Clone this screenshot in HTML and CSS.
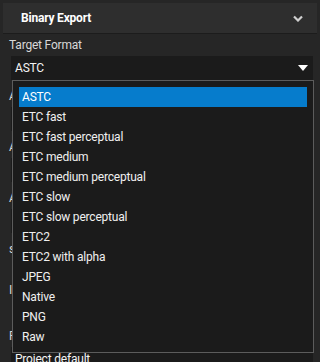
FILE: index.html
```html
<!DOCTYPE html>
<html lang="en">
<head>
<meta charset="UTF-8">
<title>Binary Export</title>
<link rel="stylesheet" href="styles.css">
</head>
<body>
<div class="panel">
  <div class="panel-header">
    <span class="panel-title">Binary Export</span>
    <svg class="chevron" width="10" height="7" viewBox="0 0 10 7">
      <path d="M1 1.5 L5 5.5 L9 1.5" fill="none" stroke="#d0d0d0" stroke-width="2.2"/>
    </svg>
  </div>

  <div class="fields">
    <div class="field">
      <div class="label">Target Format</div>
      <div class="select">
        <span>ASTC</span>
        <svg class="arrow" width="10" height="6" viewBox="0 0 10 6"><path d="M0 0 H10 L5 6 Z" fill="#ffffff"/></svg>
      </div>
    </div>
    <div class="field">
      <div class="label">ASTC Block Size</div>
      <div class="select"><span>4x4</span></div>
    </div>
    <div class="field">
      <div class="label">ASTC Quality</div>
      <div class="select"><span>Medium</span></div>
    </div>
    <div class="field">
      <div class="label">Alpha Mode</div>
      <div class="select"><span>Auto</span></div>
    </div>
    <div class="field short">
      <div class="label">sRGB</div>
      <div class="check"></div>
    </div>
    <div class="field mid">
      <div class="label">Include Mipmaps</div>
      <div class="check"></div>
    </div>
    <div class="field">
      <div class="label">Premultiply Alpha</div>
      <div class="select"><span>Project default</span></div>
    </div>
  </div>

  <div class="popup">
    <div class="option selected">ASTC</div>
    <div class="option">ETC fast</div>
    <div class="option">ETC fast perceptual</div>
    <div class="option">ETC medium</div>
    <div class="option">ETC medium perceptual</div>
    <div class="option">ETC slow</div>
    <div class="option">ETC slow perceptual</div>
    <div class="option">ETC2</div>
    <div class="option">ETC2 with alpha</div>
    <div class="option">JPEG</div>
    <div class="option">Native</div>
    <div class="option">PNG</div>
    <div class="option">Raw</div>
  </div>
</div>
</body>
</html>
```

FILE: styles.css
```css
body {
  margin: 0;
  background-color: #262626;
  font-family: Roboto, "Open Sans", sans-serif;
  font-size: 12px;
  letter-spacing: -0.2px;
  color: #f0f0f0;
  overflow: hidden;
  height: 362px;
}

.panel {
  position: relative;
  padding: 3px 3px 0 3px;
}

.panel-header {
  height: 30px;
  background-color: #2e2e2e;
  border-bottom: 1px solid #1c1c1c;
  display: flex;
  align-items: center;
  justify-content: space-between;
  padding: 0 14px 0 18px;
}

.panel-title {
  font-weight: bold;
  font-size: 12px;
  color: #ffffff;
}

.chevron {
  display: block;
}

.fields {
  padding: 2px 4px 0 6px;
}

.field {
  margin-bottom: 7px;
}

.label {
  height: 18px;
  line-height: 18px;
  color: #d8d8d8;
  margin-bottom: 2px;
}

.select {
  height: 24px;
  margin-left: 2px;
  background-color: #1b1b1b;
  display: flex;
  align-items: center;
  justify-content: space-between;
  padding: 0 5px 0 4px;
  color: #f4f4f4;
}

.arrow {
  display: block;
}

.check {
  height: 14px;
}

.field.mid .check {
  height: 19px;
}

.popup {
  position: absolute;
  left: 12px;
  top: 80px;
  width: 288px;
  padding: 6px 6px 5px 6px;
  background-color: #1b1b1b;
  border: 1px solid #5c5c5c;
}

.option {
  height: 20px;
  line-height: 20px;
  padding-left: 3px;
  color: #f0f0f0;
}

.option.selected {
  background-color: #067ccc;
  color: #ffffff;
}
```
